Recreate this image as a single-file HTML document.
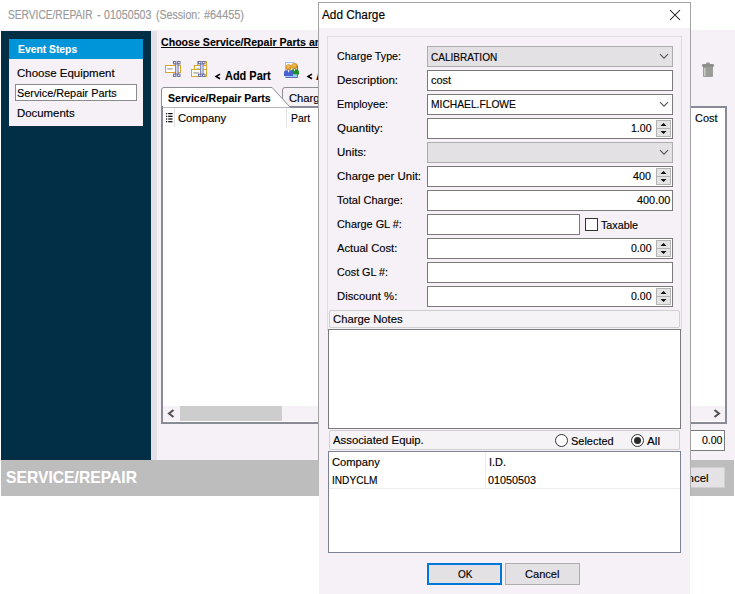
<!DOCTYPE html>
<html><head><meta charset="utf-8"><title>Add Charge</title>
<style>
html,body{margin:0;padding:0;}
body{width:735px;height:594px;position:relative;overflow:hidden;background:#ffffff;font-family:"Liberation Sans",sans-serif;font-size:11px;color:#111;}
div,span,svg{position:absolute;box-sizing:border-box;}
.t{white-space:nowrap;display:block;-webkit-text-stroke:0.15px currentColor;}
#mainbg{left:1px;top:30px;width:734px;height:430px;background:#f5f1f6;}
#dark{left:1px;top:31px;width:150px;height:429px;background:#022f45;}
#strip{left:151px;top:31px;width:6px;height:429px;background:#e5dfe8;}
#band{left:1px;top:460px;width:733px;height:35.5px;background:#bdbdbd;}
#eshead{left:9px;top:39px;width:134px;height:20px;background:#0094d9;}
#eslist{left:9px;top:59px;width:134px;height:66.5px;background:#f5f1f6;}
#essel{left:15px;top:84px;width:122px;height:16.5px;background:#ffffff;border:1px solid #8c8c8c;}
/* main grid */
#grid{left:161px;top:106px;width:566px;height:318px;background:#ffffff;border:2px solid #888b96;}
#gscroll{left:163px;top:406px;width:562px;height:15px;background:#f5f1f6;}
#gthumb{left:180px;top:406px;width:102px;height:15px;background:#cdcdcd;}
.colsep{width:1px;background:#e2e2e2;}
/* right bits */
#zerobox{left:688px;top:430px;width:37px;height:21px;background:#fff;border:1px solid #7a7a7a;}
#mcancel{left:650px;top:467px;width:75px;height:21px;background:#e5e2e6;border:1px solid #d0d0d0;}
/* dialog */
#dlg{left:319px;top:3px;width:371px;height:600px;background:#f5f1f6;}
.dbv{top:2px;width:1px;height:458px;background:#a2a2a2;}
#dbt{left:318px;top:2px;width:373px;height:1px;background:#a2a2a2;}
#dlgtitle{left:319px;top:3px;width:371px;height:25px;background:#ffffff;}
#panel{left:327px;top:36px;width:355px;height:295px;border:1px solid #dddddd;border-bottom:none;}
.fld{left:427px;width:246px;height:21px;background:#ffffff;border:1px solid #7a7a7a;}
.cmb{left:427px;width:246px;height:21px;background:#e4e1e5;border:1px solid #adadad;}
.spin{left:656px;width:15px;height:8.5px;background:#e4e4e4;border:1px solid #b4b4b4;}
.hdrbox{left:329px;width:351px;border:1px solid #cfcfcf;border-radius:2px;background:#f6f3f7;}
.area{left:328px;width:353px;background:#ffffff;border:1px solid #7a7a7a;}
#chk{left:585px;top:218px;width:13px;height:13px;background:#fff;border:1px solid #333;}
.radio{width:13px;height:13px;border-radius:50%;background:#fff;border:1px solid #333;}
#ok{left:427px;top:563px;width:75px;height:22px;background:#e4e1e5;border:2px solid #0078d7;}
#cancel{left:505px;top:563px;width:75px;height:22px;background:#e4e1e5;border:1px solid #adadad;}

</style></head>
<body>
<div id="mainbg"></div>
<div id="dark"></div>
<div id="strip"></div>
<div id="band"></div>
<div id="eshead"></div>
<div id="eslist"></div>
<div id="essel"></div>

<!-- toolbar icons -->
<svg id="ic1" style="left:164px;top:60px" width="18" height="18" viewBox="0 0 18 18">
  <rect x="1.5" y="5.5" width="15" height="7" fill="#fff" stroke="#d9a52b"/>
  <rect x="3.3" y="8.1" width="5.4" height="1.5" fill="#b0b0b0"/>
  <g fill="#f0f0fa" stroke="#6e72a3" stroke-width="1">
   <rect x="9.5" y="1.5" width="2.4" height="2.4"/><rect x="13.6" y="1.5" width="2.4" height="2.4"/>
   <rect x="9.5" y="14.1" width="2.4" height="2.4"/><rect x="13.6" y="14.1" width="2.4" height="2.4"/>
  </g>
  <path d="M11 3.2 L12 4.6 M14.5 3.2 L13.5 4.6 M11 14.8 L12 13.4 M14.5 14.8 L13.5 13.4" stroke="#6e72a3" stroke-width="1.4" fill="none"/>
  <rect x="11.4" y="4" width="2.7" height="10" fill="#d2d4ec" stroke="#777bab" stroke-width="0.9"/>
</svg>
<svg id="ic2" style="left:190px;top:60px" width="18" height="18" viewBox="0 0 18 18">
  <rect x="7.5" y="1.5" width="9" height="5" fill="#fff" stroke="#d9a52b"/>
  <rect x="4.5" y="5.5" width="12" height="6" fill="#fff" stroke="#d9a52b"/>
  <rect x="1.5" y="9.5" width="15" height="7" fill="#fff" stroke="#d9a52b"/>
  <rect x="3.3" y="12.1" width="5.4" height="1.5" fill="#b0b0b0"/>
  <rect x="6.5" y="7.6" width="3" height="1.2" fill="#b8b8b8"/>
  <g fill="#f0f0fa" stroke="#6e72a3" stroke-width="1">
   <rect x="8.5" y="1.5" width="2.4" height="2.4"/><rect x="12.6" y="1.5" width="2.4" height="2.4"/>
   <rect x="8.5" y="14.1" width="2.4" height="2.4"/><rect x="12.6" y="14.1" width="2.4" height="2.4"/>
  </g>
  <path d="M10 3.2 L11 4.6 M13.5 3.2 L12.5 4.6 M10 14.8 L11 13.4 M13.5 14.8 L12.5 13.4" stroke="#6e72a3" stroke-width="1.4" fill="none"/>
  <rect x="10.4" y="4" width="2.7" height="10" fill="#d2d4ec" stroke="#777bab" stroke-width="0.9"/>
</svg>
<svg id="ic3" style="left:283px;top:60px" width="18" height="20" viewBox="0 0 18 20">
  <defs><radialGradient id="hg" cx="0.45" cy="0.4" r="0.6"><stop offset="0" stop-color="#f2c56e"/><stop offset="0.6" stop-color="#e0a030"/><stop offset="1" stop-color="#b97a14"/></radialGradient></defs>
  <path d="M2.5 2.5 L11 2.5 L14.5 6 L14.5 17.5 L2.5 17.5 Z" fill="#f2f6ff" stroke="#7466b8"/>
  <path d="M2.5 17.5 L2.5 2.5 L11 2.5" fill="none" stroke="#a9c3f0"/>
  <rect x="3" y="15" width="11" height="2" fill="#8fd0f5"/>
  <circle cx="11.4" cy="6" r="3" fill="url(#hg)"/>
  <path d="M8 14.5 L8 11.5 Q8 9.1 11.4 9.1 Q16 9.1 16 12 L16 14 Q16 14.5 15 14.5 Z" fill="#1d8f26"/>
  <circle cx="5.6" cy="7.2" r="2.9" fill="url(#hg)"/>
  <path d="M1 16 L1 12.5 Q1 10.1 5.6 10.1 Q10 10.1 10 12.5 L10 16 Z" fill="#4a62cf"/>
  <path d="M4.6 10.2 L5.6 12.8 L6.6 10.2Z" fill="#fff"/>
  <path d="M10.6 9.2 L11.4 11.4 L12.2 9.2Z" fill="#fff"/>
</svg>
<svg id="trash" style="left:700px;top:61px" width="16" height="18" viewBox="0 0 16 18">
  <rect x="6" y="1.5" width="4" height="2" rx="0.8" fill="#9a9c98"/>
  <rect x="2" y="3" width="12" height="3" rx="1.2" fill="#8e908c"/>
  <path d="M3 6 L13 6 L13 15 Q13 16 12 16 L4 16 Q3 16 3 15 Z" fill="#9b9d99"/>
  <rect x="4" y="7" width="1.6" height="8" fill="#c9cac8"/>
</svg>

<svg style="left:214px;top:73px" width="8" height="7" viewBox="0 0 8 7"><path d="M6 1.1 L2.1 3.4 L6 5.7" fill="none" stroke="#000" stroke-width="1.6"/></svg>
<svg style="left:305.7px;top:73px" width="8" height="7" viewBox="0 0 8 7"><path d="M6 1.1 L2.1 3.4 L6 5.7" fill="none" stroke="#000" stroke-width="1.6"/></svg>
<div style="left:161px;top:47px;width:160px;height:1px;background:#000"></div>
<!-- tabs -->
<svg id="tabs" style="left:158px;top:84px" width="165" height="26" viewBox="0 0 165 26">
  <path d="M124.5 23.5 L124.5 6 Q124.5 3.5 127 3.5 L165 3.5 L165 23.5 Z" fill="#f5f1f6" stroke="#8e8e96" stroke-width="1"/>
  <path d="M3.5 24 L3.5 6 Q3.5 3.5 6 3.5 L114 3.5 L132.5 23.5 L132.5 24 Z" fill="#ffffff" stroke="#8e8e96" stroke-width="1"/>
</svg>
<div id="grid"></div>
<div style="left:163px;top:106px;width:126px;height:1px;background:#fff"></div><div style="left:163px;top:107px;width:127px;height:1px;background:#b4b6c2"></div>
<div id="gscroll"></div>
<div id="gthumb"></div>
<svg id="garrl" style="left:167px;top:409px" width="8" height="9" viewBox="0 0 8 9"><path d="M6.5 1 L2 4.5 L6.5 8" fill="none" stroke="#505050" stroke-width="2"/></svg>
<svg id="garrr" style="left:713px;top:409px" width="8" height="9" viewBox="0 0 8 9"><path d="M1.5 1 L6 4.5 L1.5 8" fill="none" stroke="#505050" stroke-width="2"/></svg>
<div class="colsep" style="left:174px;top:108px;height:19px"></div>
<div class="colsep" style="left:286px;top:108px;height:19px"></div>
<svg id="gicon" style="left:165px;top:112px" width="8" height="11" viewBox="0 0 8 11">
  <g fill="#000"><rect x="1" y="1" width="1.2" height="1.2"/><rect x="3.2" y="1" width="4.3" height="1.2"/>
  <rect x="1" y="3.7" width="1.2" height="1.2"/><rect x="3.2" y="3.7" width="4.3" height="1.2"/>
  <rect x="1" y="6.4" width="1.2" height="1.2"/><rect x="3.2" y="6.4" width="4.3" height="1.2"/>
  <rect x="1" y="9.1" width="1.2" height="1.2"/><rect x="3.2" y="9.1" width="4.3" height="1.2"/></g>
</svg>
<div id="zerobox"></div>
<div id="mcancel"></div>

<span id="t_title" class="t" style="left:8.25px;transform-origin:left center;top:9.24px;font-size:12px;line-height:12px;font-weight:400;color:#999999;transform:scaleX(0.8489);">SERVICE/REPAIR</span>
<span id="t_title2" class="t" style="left:97.20px;transform-origin:left center;top:9.24px;font-size:12px;line-height:12px;font-weight:400;color:#999999;transform:scaleX(0.9000);">-</span>
<span id="t_title3" class="t" style="left:104.00px;transform-origin:left center;top:9.24px;font-size:12px;line-height:12px;font-weight:400;color:#999999;transform:scaleX(0.8878);">01050503</span>
<span id="t_title4" class="t" style="left:156.00px;transform-origin:left center;top:9.24px;font-size:12px;line-height:12px;font-weight:400;color:#999999;transform:scaleX(0.8834);">(Session:</span>
<span id="t_title5" class="t" style="left:204.10px;transform-origin:left center;top:9.24px;font-size:12px;line-height:12px;font-weight:400;color:#999999;transform:scaleX(0.9059);">#64455)</span>
<span id="t_es" class="t" style="left:17.80px;transform-origin:left center;top:44.12px;font-size:11.2px;line-height:11.2px;font-weight:700;color:#ffffff;transform:scaleX(0.9243);-webkit-text-stroke:0.1px currentColor;">Event Steps</span>
<span id="t_ce" class="t" style="left:16.90px;transform-origin:left center;top:68.27px;font-size:11.5px;line-height:11.5px;font-weight:400;color:#000;transform:scaleX(0.9978);">Choose Equipment</span>
<span id="t_sp" class="t" style="left:16.90px;transform-origin:left center;top:88.27px;font-size:11.5px;line-height:11.5px;font-weight:400;color:#000;transform:scaleX(0.9444);">Service/Repair Parts</span>
<span id="t_doc" class="t" style="left:16.90px;transform-origin:left center;top:108.27px;font-size:11.5px;line-height:11.5px;font-weight:400;color:#000;transform:scaleX(0.9902);">Documents</span>
<span id="t_band" class="t" style="left:6.00px;transform-origin:left center;top:469.03px;font-size:16.5px;line-height:16.5px;font-weight:700;color:#ffffff;transform:scaleX(0.9504);-webkit-text-stroke:0.1px currentColor;">SERVICE/REPAIR</span>
<span id="t_choose" class="t" style="left:161.00px;transform-origin:left center;top:36.18px;font-size:11.6px;line-height:11.6px;font-weight:700;color:#000;transform:scaleX(0.9148);-webkit-text-stroke:0.1px currentColor;">Choose Service/Repair Parts and Charges</span>
<span id="t_addpart" class="t" style="left:225.40px;transform-origin:left center;top:70.42px;font-size:12.5px;line-height:12.5px;font-weight:700;color:#000;transform:scaleX(0.8773);-webkit-text-stroke:0.1px currentColor;">Add Part</span>
<span id="t_addch" class="t" style="left:315.50px;transform-origin:left center;top:70.42px;font-size:12.5px;line-height:12.5px;font-weight:700;color:#000;transform:scaleX(0.8773);-webkit-text-stroke:0.1px currentColor;">Add Charge</span>
<span id="t_tab1" class="t" style="left:168.00px;transform-origin:left center;top:92.69px;font-size:11px;line-height:11px;font-weight:700;color:#000;transform:scaleX(0.9601);-webkit-text-stroke:0.1px currentColor;">Service/Repair Parts</span>
<span id="t_tab2" class="t" style="left:288.50px;transform-origin:left center;top:92.69px;font-size:11px;line-height:11px;font-weight:400;color:#000;transform:scaleX(1.0217);">Charges</span>
<span id="t_company" class="t" style="left:177.90px;transform-origin:left center;top:113.39px;font-size:11px;line-height:11px;font-weight:400;color:#000;transform:scaleX(1.0217);">Company</span>
<span id="t_part" class="t" style="left:290.50px;transform-origin:left center;top:113.39px;font-size:11px;line-height:11px;font-weight:400;color:#000;transform:scaleX(0.9461);">Part</span>
<span id="t_cost" class="t" style="left:694.50px;transform-origin:left center;top:113.39px;font-size:11px;line-height:11px;font-weight:400;color:#000;transform:scaleX(0.9945);">Cost</span>
<span id="t_zero" class="t" style="right:12.80px;transform-origin:right center;top:435.29px;font-size:11px;line-height:11px;font-weight:400;color:#000;transform:scaleX(0.9570);">0.00</span>
<span id="t_mcancel" class="t" style="left:672.50px;transform-origin:left center;top:473.09px;font-size:11px;line-height:11px;font-weight:400;color:#000;transform:scaleX(1.0400);">Cancel</span>
<!-- dialog -->
<div id="dlg"></div>
<div id="dbt"></div><div class="dbv" style="left:318px"></div><div class="dbv" style="left:690px"></div>
<div style="left:318px;top:460px;width:1px;height:35.5px;background:#b9b9b9"></div><div style="left:690px;top:460px;width:1px;height:35.5px;background:#b0b0b0"></div><div style="left:318px;top:495.5px;width:1px;height:100px;background:#fff"></div>
<div id="dlgtitle"></div>
<svg id="closex" style="left:669px;top:9px" width="12" height="12" viewBox="0 0 12 12"><path d="M1 1 L11 11 M11 1 L1 11" stroke="#111" stroke-width="1.05" fill="none"/></svg>
<div id="panel"></div>

<div class="cmb" style="top:46px"></div>
<div class="fld" style="top:70px"></div>
<div class="fld" style="top:94px"></div>
<div class="fld" style="top:118px"></div>
<div class="cmb" style="top:142px"></div>
<div class="fld" style="top:166px"></div>
<div class="fld" style="top:190px"></div>
<div class="fld" style="top:214px;width:153px"></div>
<div class="fld" style="top:238px"></div>
<div class="fld" style="top:262px"></div>
<div class="fld" style="top:286px"></div>
<div id="chk"></div>

<!-- combo chevrons -->
<svg class="chev" style="left:659px;top:53px" width="10" height="7" viewBox="0 0 10 7"><path d="M1 1.2 L5 5.2 L9 1.2" fill="none" stroke="#555" stroke-width="1.1"/></svg>
<svg class="chev" style="left:659px;top:101px" width="10" height="7" viewBox="0 0 10 7"><path d="M1 1.2 L5 5.2 L9 1.2" fill="none" stroke="#555" stroke-width="1.1"/></svg>
<svg class="chev" style="left:659px;top:149px" width="10" height="7" viewBox="0 0 10 7"><path d="M1 1.2 L5 5.2 L9 1.2" fill="none" stroke="#555" stroke-width="1.1"/></svg>

<!-- spinners -->
<div class="spin" style="top:120px"></div><div class="spin" style="top:128px"></div>
<div class="spin" style="top:168px"></div><div class="spin" style="top:176px"></div>
<div class="spin" style="top:240px"></div><div class="spin" style="top:248px"></div>
<div class="spin" style="top:288px"></div><div class="spin" style="top:296px"></div>
<svg style="left:660px;top:122px" width="7" height="13" viewBox="0 0 7 13"><path d="M0.5 4 L3.5 1 L6.5 4Z M0.5 9 L3.5 12 L6.5 9Z" fill="#111"/></svg>
<svg style="left:660px;top:170px" width="7" height="13" viewBox="0 0 7 13"><path d="M0.5 4 L3.5 1 L6.5 4Z M0.5 9 L3.5 12 L6.5 9Z" fill="#111"/></svg>
<svg style="left:660px;top:242px" width="7" height="13" viewBox="0 0 7 13"><path d="M0.5 4 L3.5 1 L6.5 4Z M0.5 9 L3.5 12 L6.5 9Z" fill="#111"/></svg>
<svg style="left:660px;top:290px" width="7" height="13" viewBox="0 0 7 13"><path d="M0.5 4 L3.5 1 L6.5 4Z M0.5 9 L3.5 12 L6.5 9Z" fill="#111"/></svg>

<div class="hdrbox" style="top:310px;height:18px"></div>
<div class="area" style="top:329px;height:100px"></div>
<div class="hdrbox" style="top:430px;height:20px"></div>
<div class="area" style="top:451px;height:102px;border-color:#7d8292"></div>
<div class="colsep" style="left:485px;top:452px;height:36px;background:#ececec"></div>
<div style="left:329px;top:488px;width:351px;height:1px;background:#ededed"></div>
<div class="radio" style="left:555px;top:434px"></div>
<div class="radio" style="left:631px;top:434px"></div>
<div style="left:634px;top:437px;width:7px;height:7px;border-radius:50%;background:#2a2a2a"></div>
<div id="ok"></div>
<div id="cancel"></div>
<span id="t_dtitle" class="t" style="left:322.00px;transform-origin:left center;top:8.84px;font-size:12px;line-height:12px;font-weight:400;color:#000;transform:scaleX(0.9837);">Add Charge</span>
<span id="t_calib" class="t" style="left:431.40px;transform-origin:left center;top:51.69px;font-size:11px;line-height:11px;font-weight:400;color:#000;transform:scaleX(0.9127);">CALIBRATION</span>
<span id="t_cost2" class="t" style="left:430.60px;transform-origin:left center;top:74.69px;font-size:11px;line-height:11px;font-weight:400;color:#000;transform:scaleX(0.9957);">cost</span>
<span id="t_emp" class="t" style="left:430.60px;transform-origin:left center;top:98.69px;font-size:11px;line-height:11px;font-weight:400;color:#000;transform:scaleX(0.9322);">MICHAEL.FLOWE</span>
<span id="t_q" class="t" style="left:630.50px;transform-origin:left center;top:122.69px;font-size:11px;line-height:11px;font-weight:400;color:#000;transform:scaleX(0.9570);">1.00</span>
<span id="t_cpu" class="t" style="left:633.00px;transform-origin:left center;top:170.69px;font-size:11px;line-height:11px;font-weight:400;color:#000;transform:scaleX(0.9804);">400</span>
<span id="t_tc" class="t" style="left:636.75px;transform-origin:left center;top:194.69px;font-size:11px;line-height:11px;font-weight:400;color:#000;transform:scaleX(0.9879);">400.00</span>
<span id="t_ac" class="t" style="left:630.50px;transform-origin:left center;top:242.69px;font-size:11px;line-height:11px;font-weight:400;color:#000;transform:scaleX(0.9570);">0.00</span>
<span id="t_disc" class="t" style="left:630.50px;transform-origin:left center;top:290.69px;font-size:11px;line-height:11px;font-weight:400;color:#000;transform:scaleX(0.9570);">0.00</span>
<span id="t_tax" class="t" style="left:601.00px;transform-origin:left center;top:219.69px;font-size:11px;line-height:11px;font-weight:400;color:#000;transform:scaleX(0.9757);">Taxable</span>
<span id="t_notes" class="t" style="left:332.80px;transform-origin:left center;top:313.67px;font-size:11.5px;line-height:11.5px;font-weight:400;color:#000;transform:scaleX(0.9821);">Charge Notes</span>
<span id="t_assoc" class="t" style="left:332.80px;transform-origin:left center;top:434.67px;font-size:11.5px;line-height:11.5px;font-weight:400;color:#000;transform:scaleX(0.9852);">Associated Equip.</span>
<span id="t_sel" class="t" style="left:571.40px;transform-origin:left center;top:435.69px;font-size:11px;line-height:11px;font-weight:400;color:#000;transform:scaleX(0.9950);">Selected</span>
<span id="t_all" class="t" style="left:647.00px;transform-origin:left center;top:435.69px;font-size:11px;line-height:11px;font-weight:400;color:#000;transform:scaleX(1.0626);">All</span>
<span id="t_co2" class="t" style="left:332.20px;transform-origin:left center;top:456.69px;font-size:11px;line-height:11px;font-weight:400;color:#000;transform:scaleX(1.0153);">Company</span>
<span id="t_id" class="t" style="left:489.00px;transform-origin:left center;top:456.69px;font-size:11px;line-height:11px;font-weight:400;color:#000;transform:scaleX(0.9927);">I.D.</span>
<span id="t_indy" class="t" style="left:331.50px;transform-origin:left center;top:474.69px;font-size:11px;line-height:11px;font-weight:400;color:#000;transform:scaleX(0.9189);">INDYCLM</span>
<span id="t_num" class="t" style="left:488.00px;transform-origin:left center;top:474.69px;font-size:11px;line-height:11px;font-weight:400;color:#000;transform:scaleX(0.9805);">01050503</span>
<span id="t_ok" class="t" style="left:457.50px;transform-origin:left center;top:568.69px;font-size:11px;line-height:11px;font-weight:400;color:#000;transform:scaleX(0.9116);">OK</span>
<span id="t_cancel" class="t" style="left:525.00px;transform-origin:left center;top:568.69px;font-size:11px;line-height:11px;font-weight:400;color:#000;transform:scaleX(1.0073);">Cancel</span>
<span id="t_l0" class="t" style="left:337.20px;transform-origin:left center;top:51.17px;font-size:11.5px;line-height:11.5px;font-weight:400;color:#000;transform:scaleX(0.9304);">Charge Type:</span>
<span id="t_l1" class="t" style="left:337.20px;transform-origin:left center;top:75.17px;font-size:11.5px;line-height:11.5px;font-weight:400;color:#000;transform:scaleX(1.0055);">Description:</span>
<span id="t_l2" class="t" style="left:337.20px;transform-origin:left center;top:99.17px;font-size:11.5px;line-height:11.5px;font-weight:400;color:#000;transform:scaleX(0.9394);">Employee:</span>
<span id="t_l3" class="t" style="left:337.20px;transform-origin:left center;top:123.17px;font-size:11.5px;line-height:11.5px;font-weight:400;color:#000;transform:scaleX(1.0004);">Quantity:</span>
<span id="t_l4" class="t" style="left:337.20px;transform-origin:left center;top:147.17px;font-size:11.5px;line-height:11.5px;font-weight:400;color:#000;transform:scaleX(0.9964);">Units:</span>
<span id="t_l5" class="t" style="left:337.20px;transform-origin:left center;top:171.17px;font-size:11.5px;line-height:11.5px;font-weight:400;color:#000;transform:scaleX(0.9961);">Charge per Unit:</span>
<span id="t_l6" class="t" style="left:337.20px;transform-origin:left center;top:195.17px;font-size:11.5px;line-height:11.5px;font-weight:400;color:#000;transform:scaleX(0.9619);">Total Charge:</span>
<span id="t_l7" class="t" style="left:337.20px;transform-origin:left center;top:219.17px;font-size:11.5px;line-height:11.5px;font-weight:400;color:#000;transform:scaleX(0.9443);">Charge GL #:</span>
<span id="t_l8" class="t" style="left:337.20px;transform-origin:left center;top:243.17px;font-size:11.5px;line-height:11.5px;font-weight:400;color:#000;transform:scaleX(0.9726);">Actual Cost:</span>
<span id="t_l9" class="t" style="left:337.20px;transform-origin:left center;top:267.17px;font-size:11.5px;line-height:11.5px;font-weight:400;color:#000;transform:scaleX(0.9359);">Cost GL #:</span>
<span id="t_l10" class="t" style="left:337.20px;transform-origin:left center;top:291.17px;font-size:11.5px;line-height:11.5px;font-weight:400;color:#000;transform:scaleX(0.9827);">Discount %:</span>

</body></html>
